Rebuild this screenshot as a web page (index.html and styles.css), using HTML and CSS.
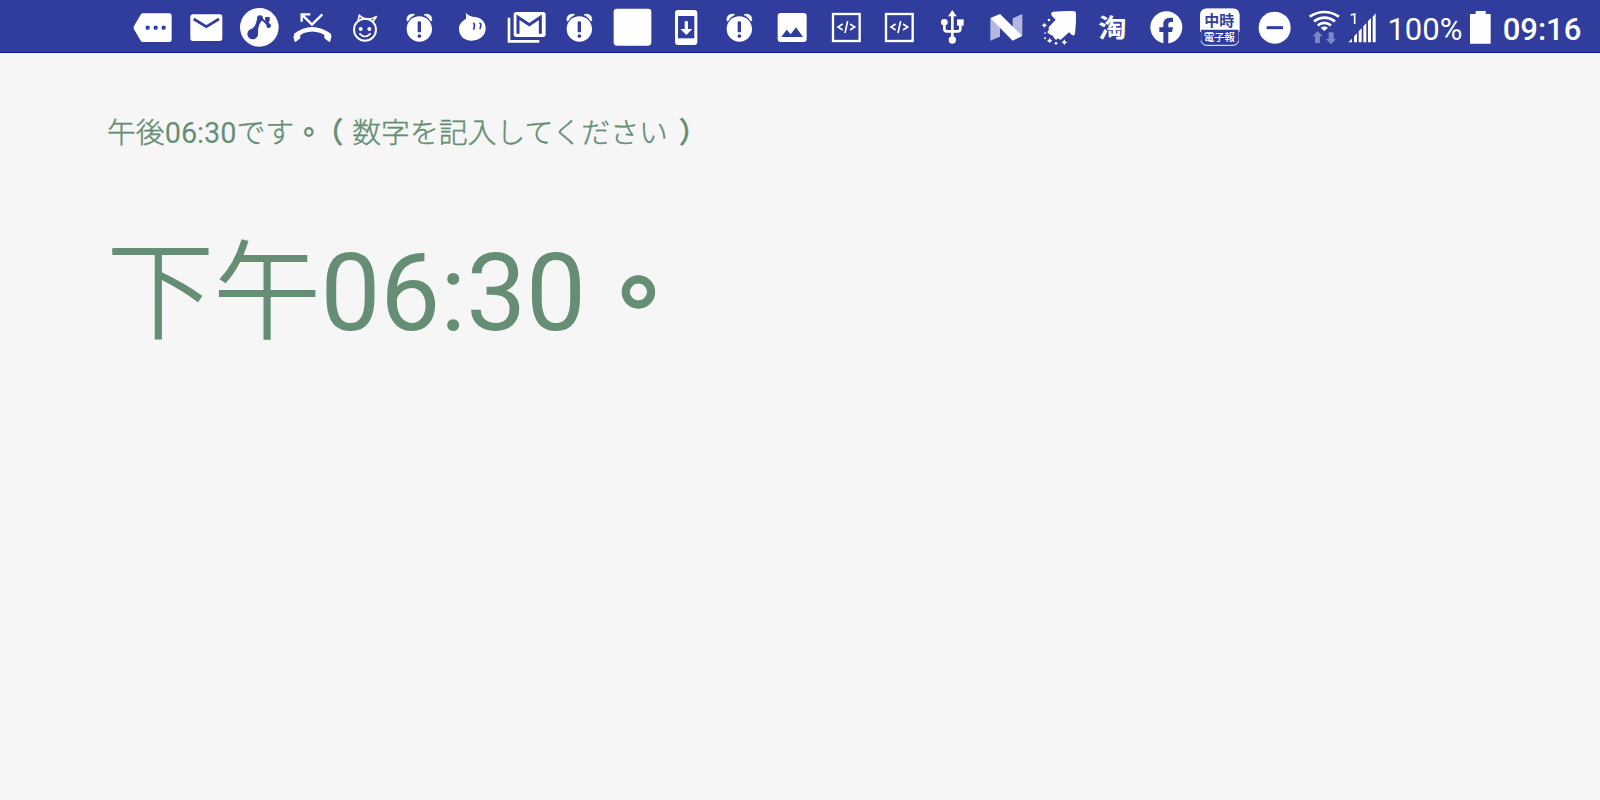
FILE: index.html
```html
<!DOCTYPE html>
<html lang="ja">
<head>
<meta charset="utf-8">
<title>06:30</title>
<link rel="stylesheet" href="styles.css">
</head>
<body>
<svg class="defs" width="0" height="0">
  <symbol id="alarm" viewBox="189 0 160 159">
    <circle cx="268" cy="87" r="38" fill="#fff"/>
    <path d="M231 62C229 48 239 39 254 44Q240 50 234 63ZM305 62C307 48 297 39 282 44Q296 50 302 63Z" fill="#fff" stroke="#fff" stroke-width="2"/>
    <path d="M263 65Q268 62 273 65V97H263Z" fill="#303d9d"/><circle cx="268" cy="108" r="5.5" fill="#303d9d"/>
  </symbol>
  <symbol id="code" viewBox="209 0 160 159">
    <rect x="248" y="42" width="80" height="81" fill="none" stroke="#fff" stroke-width="7"/>
    <path d="M277 72L263 81L277 90M299 72L313 81L299 90M292 63L284 99" fill="none" stroke="#fff" stroke-width="5"/>
  </symbol>
</svg>
<header class="bar">
  <div class="notes">
    <svg class="ic" viewBox="19 0 160 159"><path fill="#fff" d="M70 40H149Q156 40 156 47V119Q156 126 149 126H70Q66 126 63 122L43 88Q40 83 43 78L63 44Q66 40 70 40Z"/><g fill="#303d9d"><circle cx="84" cy="83" r="6.500"/><circle cx="108" cy="83" r="6.500"/><circle cx="132" cy="83" r="6.500"/></g></svg>
    <svg class="ic" viewBox="179 0 160 159"><rect x="210" y="43" width="96" height="80" rx="8" fill="#fff"/><path d="M220 57L258 80L296 57" fill="none" stroke="#303d9d" stroke-width="8"/></svg>
    <svg class="ic" viewBox="339 0 160 159"><circle cx="418" cy="82" r="58" fill="#fff"/><g fill="#303d9d"><circle cx="398" cy="102" r="16"/><circle cx="420" cy="55" r="9"/><circle cx="446" cy="77" r="7"/><path d="M387 91Q402 85 407 72L412 54L427 60Q416 72 415 84L413 107Z"/><path d="M436 51H449V63L443 67L435 62Z"/></g><path d="M424 55L446 77M441 60L446 77" stroke="#303d9d" stroke-width="6"/></svg>
    <svg class="ic" viewBox="499 0 160 159"><path d="M526 107Q577 68 631 107" fill="none" stroke="#fff" stroke-width="13"/><path d="M542 92V112Q542 116 538 118L529 125Q526 127 524 123L521 109Q530 98 542 92ZM614 92V112Q614 116 618 118L628 125Q631 127 632 123L636 107Q626 98 614 92Z" fill="#fff"/><path d="M608 43L577 74L549 46M546 65V43H572" fill="none" stroke="#fff" stroke-width="7"/></svg>
    <svg class="ic" viewBox="29 0 160 159"><circle cx="104" cy="89" r="33" fill="none" stroke="#fff" stroke-width="6"/><path d="M83 62L87 46Q95 54 107 57Q123 59 139 49L127 66" fill="none" stroke="#fff" stroke-width="5"/><circle cx="91" cy="87" r="6" fill="#fff"/><circle cx="117" cy="87" r="6" fill="#fff"/><path d="M87 100Q104 119 121 100" fill="none" stroke="#fff" stroke-width="5"/></svg>
    <svg class="ic"><use href="#alarm"/></svg>
    <svg class="ic" viewBox="349 0 160 159"><path fill="#fff" d="M408 38Q418 50 437 51C456 53 468 67 468 85C468 107 450 122 426 122C403 122 388 107 388 86C388 72 397 63 409 56Q411 50 408 38Z"/><path d="M430 70Q436 70 434 79Q434 86 431 89M449 69Q455 70 453 78Q453 85 450 87" fill="none" stroke="#303d9d" stroke-width="5"/></svg>
    <svg class="ic" viewBox="509 0 160 159"><path d="M536 53V124H627" fill="none" stroke="#fff" stroke-width="8"/><rect x="550" y="36" width="96" height="75" rx="8" fill="#fff"/><path d="M563 101V52L597 74L630 52V101" fill="none" stroke="#303d9d" stroke-width="9"/></svg>
    <svg class="ic"><use href="#alarm"/></svg>
    <svg class="ic" viewBox="199 0 160 159"><rect x="222" y="26" width="113" height="111" rx="10" fill="#fff"/></svg>
    <svg class="ic" viewBox="359 0 160 159"><rect x="404" y="30" width="67" height="105" rx="9" fill="#fff"/><rect x="413" y="48" width="49" height="67" fill="#303d9d"/><path d="M433 64H443V87H456L438 105L420 87H433Z" fill="#fff"/></svg>
    <svg class="ic"><use href="#alarm"/></svg>
    <svg class="ic" viewBox="49 0 160 159"><rect x="84" y="39" width="87" height="87" rx="9" fill="#fff"/><path d="M95 111L111 89L123 103L139 82L160 111Z" fill="#303d9d"/></svg>
    <svg class="ic"><use href="#code"/></svg>
    <svg class="ic"><use href="#code"/></svg>
    <svg class="ic" viewBox="529 0 160 159"><path d="M608 116V46M584 70V86Q584 94 592 94H624Q632 94 632 86V70" fill="none" stroke="#fff" stroke-width="8"/><path d="M608 30L621 49H595Z" fill="#fff"/><circle cx="584" cy="67" r="10" fill="#fff"/><rect x="622" y="58" width="20" height="19" fill="#fff"/><circle cx="608" cy="120" r="11" fill="#fff"/></svg>
    <svg class="ic" viewBox="59 0 160 159"><path d="M90 55L119 77V110L90 122ZM186 42V107L157 88V55Z" fill="#b3b8dc"/><path d="M90 54L119 42L186 108L157 122Z" fill="#fff"/></svg>
    <svg class="ic" viewBox="219 0 160 159"><g fill="#fff"><path d="M274 40Q275 36 280 35Q312 32 342 33Q348 34 348 40Q349 70 345 102Q342 109 336 105L327 97L304 118Q299 121 294 115L289 119Q284 120 279 108L264 100Q260 96 267 89Q264 85 267 80L287 59L276 48Q272 44 274 40Z"/><path d="M253 68L256 73L261 76L256 79L253 84L250 79L245 76L250 73Z"/><path d="M269 113L272 119L277 122L272 125L269 130L266 125L261 122L266 119ZM313 118L316 124L322 127L316 130L313 136L310 130L305 127L310 124Z"/><circle cx="267" cy="60" r="4"/><circle cx="255" cy="99" r="2.500"/><circle cx="255" cy="115" r="3"/><circle cx="288" cy="130" r="4"/></g></svg>
    <svg class="ic" viewBox="379 0 160 159"><text class="cjk bold" x="416" y="111" font-size="74" textLength="85" lengthAdjust="spacingAndGlyphs">淘</text></svg>
    <svg class="ic" viewBox="539 0 160 159"><circle cx="618" cy="82" r="48" fill="#fff"/><path d="M609 132V96H597V82H609V73Q609 53 629 53H638V66H631Q624 66 624 74V82H638L635 96H624V132Z" fill="#303d9d"/></svg>
    <svg class="ic" viewBox="69 0 160 159"><rect x="92" y="27" width="115" height="109" rx="18" fill="none" stroke="#fff" stroke-width="3"/><path d="M91 89V44Q91 26 109 26H190Q208 26 208 44V89Z" fill="#fff"/><text class="cjk bold blue" x="103" y="77" font-size="45" textLength="90">中時</text><path d="M91 96V124M208 96V124" stroke="#303d9d" stroke-width="4"/><text class="cjk mid" x="101" y="123" font-size="32" textLength="94">電子報</text></svg>
  </div>
  <svg class="ic" viewBox="229 0 160 159"><circle cx="315" cy="83" r="48" fill="#fff"/><path d="M291 83H340" stroke="#303d9d" stroke-width="9"/></svg>
  <svg class="wifi" viewBox="389 0 130 159"><g fill="none" stroke="#fff" stroke-width="8"><path d="M418 50Q462 22 506 50"/><path d="M431 64Q462 42 494 64"/><path d="M442 76Q462 61 482 76"/></g><path d="M451 83Q462 76 473 83L462 93Z" fill="#fff"/><path d="M442 93L457 109H449V129H434V109H427ZM482 133L467 117H475V97H490V117H497Z" fill="#7d86c3"/></svg>
  <svg class="signal" viewBox="519 0 111 159"><path d="M542 45L554 42V72" fill="none" stroke="#fff" stroke-width="5"/><path fill="#fff" d="M535 127L546 116V127ZM552 109L561 100V127H552ZM566 94L575 85V127H566ZM580 79L589 69V127H580ZM594 63L603 54V127H594ZM608 50L617 40V127H608Z"/></svg>
  <span class="pct">100%</span>
  <svg class="batt" viewBox="265 0 75 159"><path d="M271 42H288V33H318V42H333V131H271Z" fill="#fff"/></svg>
  <span class="clock">09:16</span>
</header>
<main class="page">
  <p class="hint">午後<span class="num">06:30</span>です<span class="mark" lang="zh-TW">。</span><span class="mark open" lang="zh-TW">（</span>数字を記入してください<span class="mark close" lang="zh-TW">）</span></p>
  <p class="answer">下午<span class="num">06:30</span><span class="mark" lang="zh-TW">。</span></p>
</main>
</body>
</html>
```
FILE: styles.css
```css
body {
  margin: 0;
  height: 800px;
  background: #f6f6f6;
  overflow: hidden;
}
.defs { position: absolute; }
.bar {
  display: flex;
  box-sizing: border-box;
  height: 53px;
  padding-left: 126.33px;
  background: #303d9d;
  border-bottom: 1px solid #101498;
  color: #fff;
  font-family: Roboto, sans-serif;
  font-size: 31px;
  line-height: 59px;
  white-space: nowrap;
}
.notes { display: flex; }
.bar svg { flex: none; height: 53px; }
.ic { width: 53.333px; }
.wifi { width: 43.333px; }
.signal { width: 37px; }
.batt { width: 25px; }
.pct { width: 88.3px; padding-left: 7.5px; box-sizing: border-box; }
.clock { padding-left: 9.5px; font-weight: 500; }
.cjk {
  fill: #fff;
  font-family: "Noto Sans CJK TC", sans-serif;
}
.mid { font-weight: 500; }
.bold { font-weight: 700; }
.blue { fill: #303d9d; }
.page {
  padding: 56px 107px 0;
  color: #658e74;
  font-family: "Noto Sans CJK JP", sans-serif;
  font-weight: 300;
  text-spacing-trim: space-all;
}
.page p { margin: 0; white-space: nowrap; }
.page .hint {
  font-size: 28.85px;
  line-height: 44px;
  -webkit-text-stroke: 0.4px #658e74;
}
.page .answer {
  margin-top: 51px;
  font-size: 106.7px;
  line-height: 156px;
  -webkit-text-stroke: 1.8px #658e74;
}
.page .num {
  font-family: Roboto, sans-serif;
  font-weight: 400;
  -webkit-text-stroke: 0;
}
.mark {
  font-family: "Noto Sans CJK TC", sans-serif;
  font-weight: 500;
}
.open {
  margin: 0 8.8px 0 6px;
  font-feature-settings: "halt";
}
.close { margin-left: 11px; }
.page .answer .mark {
  padding-left: 2px;
  font-weight: 700;
  font-size: 0.94em;
  -webkit-text-stroke: 1px #658e74;
}
```
